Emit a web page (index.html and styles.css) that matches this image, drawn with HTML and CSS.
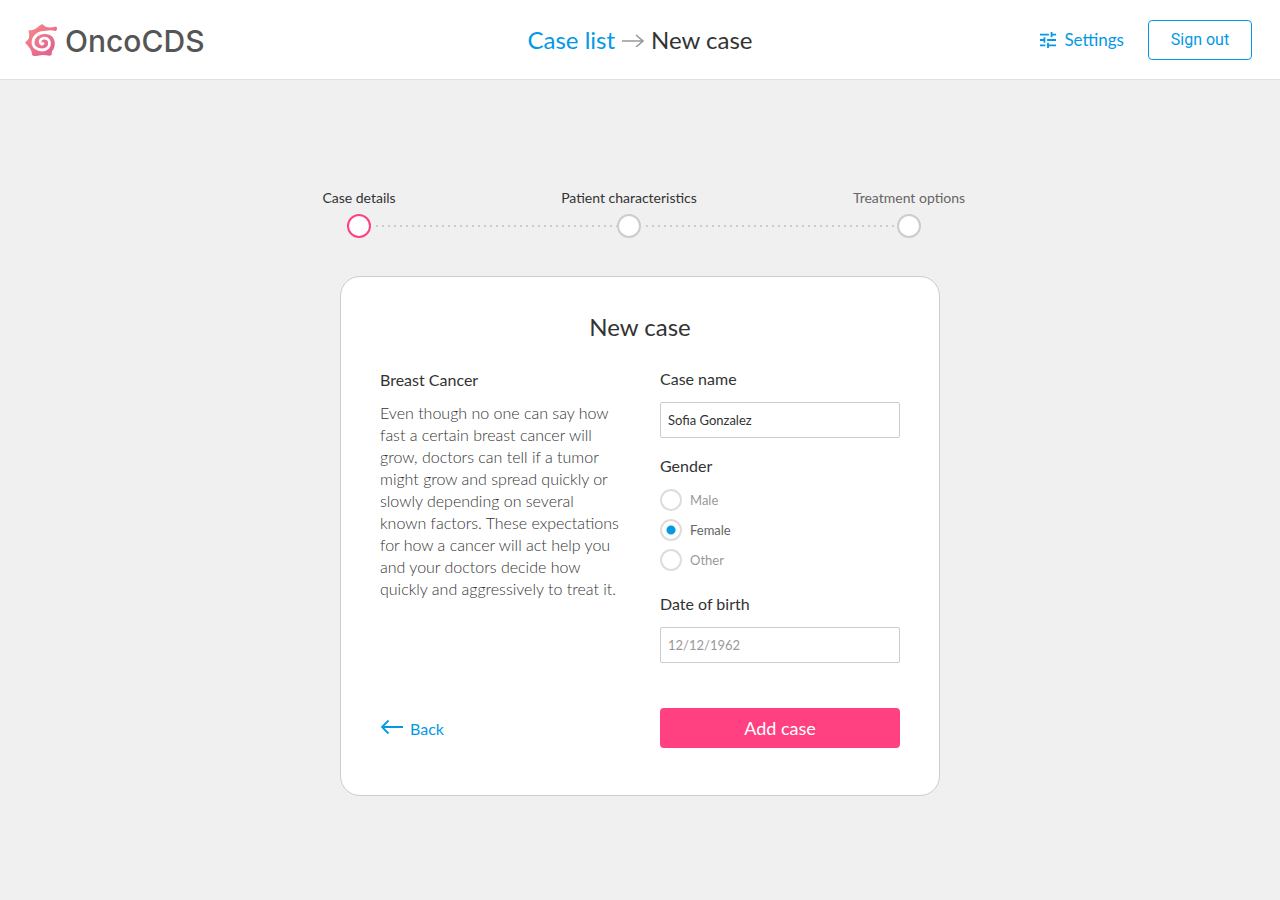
FILE: index.html
```html
<!DOCTYPE html>
<html lang="en">
<head>
<meta charset="utf-8">
<title>OncoCDS – New case</title>
<meta name="viewport" content="width=device-width, initial-scale=1">
<link rel="stylesheet" href="styles.css">
</head>
<body>
<header class="topbar">
  <a class="brand" href="#">
    <svg class="brand-mark" viewBox="0 0 32 32" aria-hidden="true">
      <defs>
        <linearGradient id="brand-fill" x1="0" y1="0" x2="1" y2="1">
          <stop offset="0" stop-color="#fb8a86"/>
          <stop offset="1" stop-color="#dd5b92"/>
        </linearGradient>
      </defs>
      <path fill="url(#brand-fill)" d="M17 0L21 3Q26 4 31 2.500Q33 4 31 7C27 6 24 6 20 7V10C26 10 30 14 29.800 20C29.600 23 28.500 26 27 27L26.500 31Q25 32 23 31.500Q18 30.500 14 31.500Q9 33 7 31Q7 27.500 5 24.500Q3 22 0 18.500Q3 16.500 4 14Q4.500 10 3.500 6.500Q8 6.500 11 4.500Q14 2 17 0Z"/>
      <path fill="none" stroke="#fff" stroke-width="2.800" stroke-linecap="round" d="M22 8.300C13 7.700 8 13 8 18.500C8 23 12 26 17 26C22 26 25 22.500 24.500 18.500C24 15.500 21.500 14 19 14.200C16 14.500 14.800 16.500 15.200 18.500C15.600 20 17 20.400 18 19.500"/>
    </svg>
    <span class="brand-name">OncoCDS</span>
  </a>
  <nav class="crumbs" aria-label="Breadcrumb">
    <a class="link" href="#">Case list</a>
    <svg class="crumb-arrow" viewBox="0 0 22 14" aria-hidden="true"><path d="M0 8H21M14 2l7 6-7 6"/></svg>
    <span aria-current="page">New case</span>
  </nav>
  <div class="actions">
    <a class="settings link" href="#">
      <svg class="settings-icon" viewBox="3 3 18 18" aria-hidden="true"><path d="M3 17v2h6v-2H3zM3 5v2h10V5H3zm10 16v-2h8v-2h-8v-2h-2v6h2zM7 9v2H3v2h4v2h2V9H7zm14 4v-2H11v2h10zm-6-4h2V7h4V5h-4V3h-2v6z"/></svg>
      <span>Settings</span>
    </a>
    <button class="signout" type="button">Sign out</button>
  </div>
</header>
<main class="page">
  <ol class="stepper">
    <li class="step step-current" aria-current="step"><span class="step-label">Case details</span><span class="step-dot"></span><span class="step-line"></span></li>
    <li class="step"><span class="step-label">Patient characteristics</span><span class="step-dot"></span><span class="step-line"></span></li>
    <li class="step"><span class="step-label step-later">Treatment options</span><span class="step-dot"></span></li>
  </ol>
  <form class="card">
    <h1 class="card-title">New case</h1>
    <div class="columns">
      <section class="about">
        <h2 class="about-title">Breast Cancer</h2>
        <p class="about-text">Even though no one can say how fast a certain breast cancer will grow, doctors can tell if a tumor might grow and spread quickly or slowly depending on several known factors. These expectations for how a cancer will act help you and your doctors decide how quickly and aggressively to treat it.</p>
      </section>
      <div class="fields">
        <div class="field">
          <label class="label" for="case-name">Case name</label>
          <input class="input" id="case-name" type="text" value="Sofia Gonzalez">
        </div>
        <fieldset class="gender">
          <legend class="label">Gender</legend>
          <label class="option"><input class="radio" type="radio" name="gender" value="male"><span>Male</span></label>
          <label class="option"><input class="radio" type="radio" name="gender" value="female" checked><span>Female</span></label>
          <label class="option"><input class="radio" type="radio" name="gender" value="other"><span>Other</span></label>
        </fieldset>
        <div class="field">
          <label class="label" for="birth">Date of birth</label>
          <input class="input" id="birth" type="text" placeholder="12/12/1962">
        </div>
      </div>
    </div>
    <div class="columns footer">
      <a class="back link" href="#">
        <svg class="back-arrow" viewBox="0 0 22 14" aria-hidden="true"><path d="M23 6H2M8.500 -.5L2 6l6.500 6.500"/></svg>
        <span>Back</span>
      </a>
      <button class="submit" type="submit">Add case</button>
    </div>
  </form>
</main>
</body>
</html>
```
FILE: styles.css
```css
* { box-sizing: border-box; }
body {
  margin: 0;
  min-height: 100vh;
  background: #f0f0f0;
  color: #333;
  font-family: Lato, "Open Sans", sans-serif;
  font-size: 16px;
}
.link { color: #0399e5; text-decoration: none; }
.topbar {
  display: grid;
  grid-template-columns: 1fr auto 1fr;
  align-items: center;
  height: 80px;
  padding: 0 25px;
  background: #fff;
  border-bottom: 1px solid #e0e0e0;
}
.brand { display: flex; align-items: center; gap: 8px; color: #555; text-decoration: none; }
.brand-mark { width: 32px; height: 32px; }
.brand-name { padding-top: 2px; font-family: Inter, sans-serif; font-size: 30px; font-weight: 500; line-height: 40px; }
.crumbs { display: flex; align-items: center; gap: 7px; font-size: 24px; line-height: 32px; }
.crumb-arrow { width: 22px; height: 14px; fill: none; stroke: #999; stroke-width: 1.6; }
.actions { display: flex; align-items: center; justify-content: flex-end; gap: 24px; padding-right: 3px; }
.settings { display: flex; align-items: center; gap: 8px; font-size: 17px; line-height: 20px; }
.settings-icon { width: 16px; height: 16px; fill: currentColor; }
.signout {
  width: 104px;
  height: 40px;
  border: 1px solid #0399e5;
  border-radius: 4px;
  background: #fff;
  color: #0399e5;
  font: 16px Roboto, sans-serif;
}
.page { padding: 108px 16px 32px; }
.stepper {
  display: grid;
  grid-template-columns: 24px 246fr 24px 256fr 24px;
  row-gap: 6px;
  max-width: 586px;
  margin: 0 auto 38px;
  padding: 0 12px 0 0;
  list-style: none;
  font-size: 14px;
  line-height: 20px;
}
.step { display: contents; }
.step-label { grid-row: 1; justify-self: center; white-space: nowrap; }
.step:nth-child(1) .step-label, .step:nth-child(1) .step-dot { grid-column: 1; }
.step:nth-child(1) .step-line { grid-column: 2; }
.step:nth-child(2) .step-label, .step:nth-child(2) .step-dot { grid-column: 3; }
.step:nth-child(2) .step-line { grid-column: 4; }
.step:nth-child(3) .step-label, .step:nth-child(3) .step-dot { grid-column: 5; }
.step-later { color: #666; }
.step-dot { grid-row: 2; width: 24px; height: 24px; border: 2px solid #ccc; border-radius: 50%; background: #fff; }
.step-current .step-dot { border-color: #ff4081; }
.step-line {
  grid-row: 2;
  align-self: center;
  height: 2px;
  margin-left: 5px;
  background: repeating-linear-gradient(90deg, #ccc 0 2px, transparent 2px 6px);
}
.card {
  max-width: 600px;
  margin: 0 auto;
  padding: 34px 39px 47px;
  border: 1px solid #ccc;
  border-radius: 20px;
  background: #fff;
}
.card-title { margin: 0 0 24px; font-size: 24px; font-weight: 400; line-height: 32px; text-align: center; }
.columns { display: grid; grid-template-columns: 1fr 1fr; column-gap: 40px; }
.about-title { margin: 1px 0 10px; font-size: 16px; font-weight: 400; line-height: 24px; }
.about-text { margin: 0; font-weight: 300; line-height: 22px; }
.label { display: block; padding: 0; line-height: 24px; }
.input {
  display: block;
  width: 100%;
  height: 36px;
  margin-top: 11px;
  padding: 0 7px;
  border: 1px solid #ccc;
  border-radius: 2px;
  background: #fff;
  color: #333;
  font: 13px Lato, sans-serif;
}
.input::placeholder { color: #999; opacity: 1; }
.gender { margin: 16px 0 17px; padding: 0; border: 0; }
.gender .label { margin-bottom: 7px; }
.option { display: flex; align-items: center; gap: 8px; height: 30px; color: #999; font-size: 13px; }
.option:has(:checked) { color: #666; }
.radio { appearance: none; width: 22px; height: 22px; margin: 0; border: 2px solid #ddd; border-radius: 50%; background: #fff; }
.radio:checked { background: radial-gradient(circle, #0399e5 4px, #fff 5px); }
.footer { align-items: center; margin-top: 45px; }
.back { display: flex; align-items: center; gap: 8px; }
.back-arrow { width: 22px; height: 14px; overflow: visible; fill: none; stroke: currentColor; stroke-width: 1.8; }
.submit { height: 40px; border: 0; border-radius: 4px; background: #ff4081; color: #fff; font: 18px Lato, sans-serif; }
```
